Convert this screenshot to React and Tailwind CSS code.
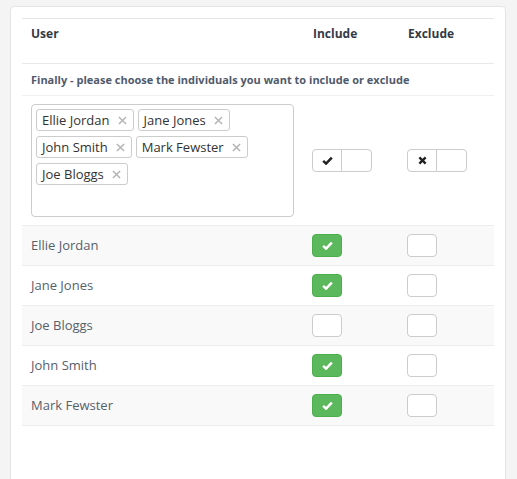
import React from "react";

const tags = ["Ellie Jordan", "Jane Jones", "John Smith", "Mark Fewster", "Joe Bloggs"];
const rows = [
  { name: "Ellie Jordan", inc: true },
  { name: "Jane Jones", inc: true },
  { name: "Joe Bloggs", inc: false },
  { name: "John Smith", inc: true },
  { name: "Mark Fewster", inc: true },
];

const Check = ({ className }) => (
  <svg viewBox="0 0 12 10" className={className}>
    <path d="M1.2 5.4 L4.4 8.4 L10.8 1.8" fill="none" stroke="currentColor" strokeWidth="2.8" strokeLinejoin="miter" />
  </svg>
);

const Cross = ({ className }) => (
  <svg viewBox="0 0 10 10" className={className}>
    <path d="M1.5 1.5 L8.5 8.5 M8.5 1.5 L1.5 8.5" fill="none" stroke="currentColor" strokeWidth="2.6" />
  </svg>
);

const Box = ({ on }) =>
  on ? (
    <div className="w-[30px] h-[23px] rounded-[4px] bg-[#5cb85c] border border-[#4cae4c] flex items-center justify-center text-white">
      <Check className="w-[11px] h-[9px]" />
    </div>
  ) : (
    <div className="w-[30px] h-[23px] rounded-[4px] bg-white border border-[#cccccc]" />
  );

const Toggle = ({ icon }) => (
  <div className="flex w-[60px] h-[23px] rounded-[4px] border border-[#cccccc] bg-white">
    <div className="w-[29px] border-r border-[#cccccc] flex items-center justify-center text-[#222]">{icon}</div>
    <div className="flex-1" />
  </div>
);

export default function App() {
  return (
    <div className="bg-[#f4f4f4] pt-[6px] px-[10px] font-['Open_Sans',sans-serif] overflow-hidden h-[479px]">
      <div className="bg-white border border-[#e4e4e4] rounded-[4px] w-[496px] h-[500px] px-[11px] pt-[11px]">
        <div className="border-t border-[#e3e6ea]">
          <div className="flex h-[45px] border-b border-[#e6e9ec] text-[12px] font-bold text-[#333a45] pt-[6px]">
            <div className="w-[281px] pl-[9px]">User</div>
            <div className="w-[95px] pl-[10px]">Include</div>
            <div className="pl-[10px]">Exclude</div>
          </div>
          <div className="h-[32px] border-b border-[#edf0f2] text-[11px] font-bold text-[#4f5a6b] pl-[9px] pt-[8px]">
            Finally - please choose the individuals you want to include or exclude
          </div>
          <div className="flex h-[130px] border-b border-[#ececec]">
            <div className="w-[281px] pl-[9px] pt-[8px]">
              <div className="w-[263px] h-[113px] border border-[#cccccc] rounded-[4px] px-[4px] pt-[4px] flex flex-wrap content-start gap-x-[4px] gap-y-[5px]">
                {tags.map((t) => (
                  <div key={t} className="h-[22px] border border-[#cccccc] rounded-[3px] pl-[5px] pr-[6px] flex items-center text-[13px] text-[#333] leading-none">
                    {t}
                    <svg viewBox="0 0 10 10" className="ml-[8px] w-[9px] h-[9px] text-[#b3b3b3]">
                      <path d="M1 1 L9 9 M9 1 L1 9" fill="none" stroke="currentColor" strokeWidth="1.6" />
                    </svg>
                  </div>
                ))}
              </div>
            </div>
            <div className="w-[95px] pl-[9px] pt-[53px]">
              <Toggle icon={<Check className="w-[11px] h-[9px]" />} />
            </div>
            <div className="pl-[9px] pt-[53px]">
              <Toggle icon={<Cross className="w-[9px] h-[9px]" />} />
            </div>
          </div>
          {rows.map((r, i) => (
            <div
              key={r.name}
              className={`flex items-center h-[40px] border-b border-[#ececec] ${i % 2 === 0 ? "bg-[#f9f9f9]" : "bg-white"}`}
            >
              <div className="w-[281px] pl-[9px] text-[13px] text-[#575f6b]">{r.name}</div>
              <div className="w-[95px] pl-[9px]">
                <Box on={r.inc} />
              </div>
              <div className="pl-[9px]">
                <Box on={false} />
              </div>
            </div>
          ))}
        </div>
      </div>
    </div>
  );
}
